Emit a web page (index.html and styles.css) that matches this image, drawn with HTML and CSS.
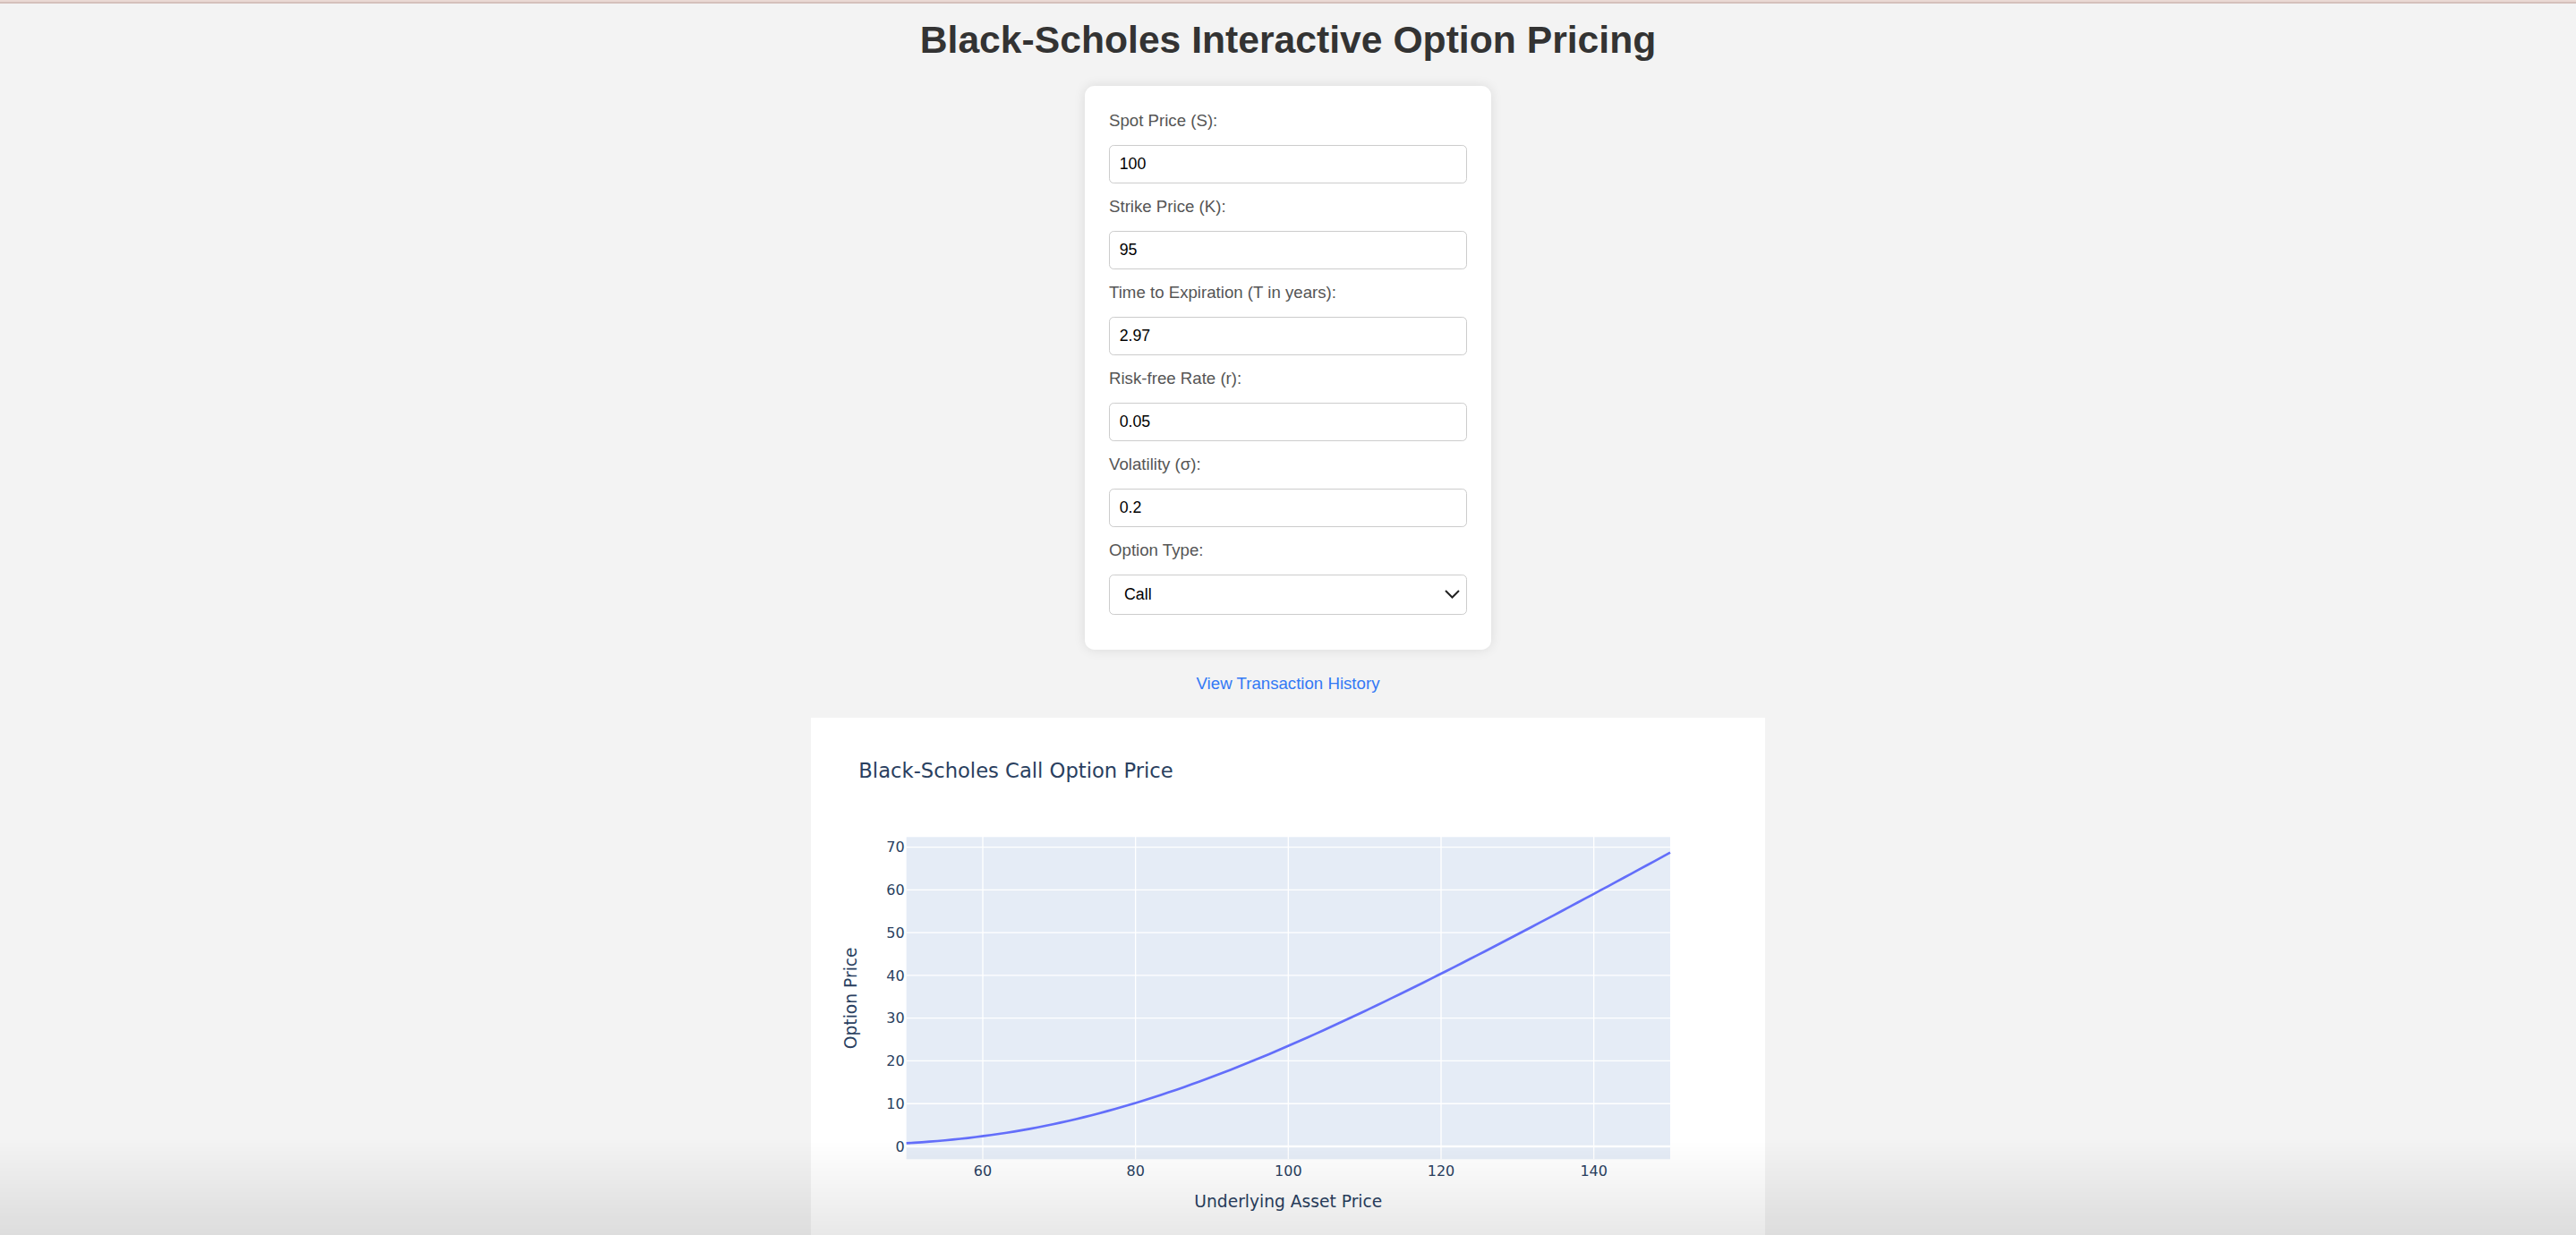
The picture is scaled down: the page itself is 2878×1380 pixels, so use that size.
FILE: index.html
```
<!DOCTYPE html>
<html>
<head>
   <meta name="viewport" content="width=device-width, initial-scale=1.0">
   <title>Black-Scholes Option Pricing</title>
   <link rel="stylesheet" href="styles.css">
</head>
<body>
<div class="topLine"></div>
<h1 class="title">Black-Scholes Interactive Option Pricing</h1>

<div class="formCard">
	<label for="spot">Spot Price (S):</label>
	<input type="number" id="spot" value="100">
	<label for="strike">Strike Price (K):</label>
	<input type="number" id="strike" value="95">
	<label for="time">Time to Expiration (T in years):</label>
	<input type="number" id="time" value="2.97">
	<label for="rate">Risk-free Rate (r):</label>
	<input type="number" id="rate" value="0.05">
	<label for="vol">Volatility (σ):</label>
	<input type="number" id="vol" value="0.2">
	<label for="optType">Option Type:</label>
	<div class="selectWrap">
		<select id="optType">
			<option value="call">Call</option>
			<option value="put">Put</option>
		</select>
		<svg class="chevron" width="17" height="10" viewBox="0 0 17 10"><path d="M1 1 L8.5 8.5 L16 1" fill="none" stroke="#222" stroke-width="2"/></svg>
	</div>
</div>

<div class="linkRow">
	<a class="historyLink" href="#">View Transaction History</a>
</div>

<div class="chartBox">
	<svg class="chart" width="1066.67" height="600" viewBox="0 0 1066.67 600">
		<rect x="106.67" y="133.33" width="853.33" height="360" fill="#e5ecf6"/>
		<g id="gridX" stroke="#fff" stroke-width="1.33"></g>
		<g id="gridY" stroke="#fff" stroke-width="1.33"></g>
		<line x1="106.67" x2="960" y1="479" y2="479" stroke="#fff" stroke-width="2.67"/>
		<polyline id="curve" fill="none" stroke="#636efa" stroke-width="2.67" stroke-linejoin="round"/>
		<g id="ticksX" class="tick" text-anchor="middle"></g>
		<g id="ticksY" class="tick" text-anchor="end"></g>
		<text class="chartTitle" x="53.33" y="67.3">Black-Scholes Call Option Price</text>
		<text class="axisTitle" x="533.33" y="547.3" text-anchor="middle">Underlying Asset Price</text>
		<text class="axisTitle" transform="translate(51,313.3) rotate(-90)" text-anchor="middle">Option Price</text>
	</svg>
</div>

<div class="screenFade"></div>

<script>
	var NS = 'http://www.w3.org/2000/svg';
	// plot area, in chart pixels
	var left = 106.67, right = 960, top = 133.33, bottom = 493.33;
	var xMin = 50, xMax = 150;
	var pxPerX = (right - left) / (xMax - xMin);
	var zeroY = 479, pxPerY = 4.778;

	function sx(v){ return left + (v - xMin) * pxPerX; }
	function sy(v){ return zeroY - v * pxPerY; }

	function addEl(parent, tag, attrs, txt){
		var el = document.createElementNS(NS, tag);
		for (var k in attrs) el.setAttribute(k, attrs[k]);
		if (txt !== undefined) el.textContent = txt;
		document.getElementById(parent).appendChild(el);
	}

	// grid lines and tick labels
	for (var gx = 60; gx <= 140; gx += 20){
		addEl('gridX', 'line', {x1: sx(gx), x2: sx(gx), y1: top, y2: bottom});
		addEl('ticksX', 'text', {x: sx(gx), y: 511.7}, gx);
	}
	for (var gy = 0; gy <= 70; gy += 10){
		if (gy > 0) addEl('gridY', 'line', {x1: left, x2: right, y1: sy(gy), y2: sy(gy)});
		addEl('ticksY', 'text', {x: 104.7, y: sy(gy) + 5.8}, gy);
	}

	// normal cdf (Abramowitz-Stegun approximation)
	function normCdf(x){
		var t = 1 / (1 + 0.2316419 * Math.abs(x));
		var d = 0.3989423 * Math.exp(-x * x / 2);
		var p = d * t * (0.3193815 + t * (-0.3565638 + t * (1.781478 + t * (-1.821256 + t * 1.330274))));
		return x > 0 ? 1 - p : p;
	}

	function callPrice(S, K, T, r, v){
		var d1 = (Math.log(S / K) + (r + v * v / 2) * T) / (v * Math.sqrt(T));
		var d2 = d1 - v * Math.sqrt(T);
		return S * normCdf(d1) - K * Math.exp(-r * T) * normCdf(d2);
	}

	var K = parseFloat(document.getElementById('strike').value);
	var T = parseFloat(document.getElementById('time').value);
	var r = parseFloat(document.getElementById('rate').value);
	var vol = parseFloat(document.getElementById('vol').value);

	var pts = [];
	for (var i = 0; i < 100; i++){
		var s = xMin + i * (xMax - xMin) / 99;
		pts.push(sx(s).toFixed(2) + ',' + sy(callPrice(s, K, T, r, vol)).toFixed(2));
	}
	document.getElementById('curve').setAttribute('points', pts.join(' '));
</script>
</body>
</html>
```

FILE: styles.css
```
html, body {
	margin: 0;
	padding: 0;
}
body {
	background: #f3f3f3;
	font-family: "Liberation Sans", Arial, sans-serif;
	color: #333;
}
.topLine {
	height: 2px;
	background: #ead8d3;
	border-bottom: 2px solid #d5c0bb;
}
.title {
	margin: 16px 0 27px;
	text-align: center;
	font-size: 42.67px;
	font-weight: bold;
	color: #333;
}
.formCard {
	width: 400px;
	margin: 0 auto;
	padding: 28px 26.67px 26.67px;
	background: #fff;
	border-radius: 10.67px;
	box-shadow: 0 0 13px rgba(0, 0, 0, 0.1);
}
.formCard label {
	display: block;
	margin-bottom: 15.5px;
	font-size: 18.67px;
	color: #555;
}
.formCard input,
.formCard select {
	display: block;
	width: 100%;
	box-sizing: border-box;
	height: 43px;
	margin: 0 0 15.5px;
	padding: 0 10.67px;
	border: 1px solid #ccc;
	border-radius: 5.33px;
	background: #fff;
	font-family: "Liberation Sans", Arial, sans-serif;
	font-size: 17.78px;
	color: #000;
	outline: none;
}
.selectWrap {
	position: relative;
}
.formCard select {
	height: 45px;
	margin-bottom: 13.3px;
	padding-left: 16px;
	-webkit-appearance: none;
	appearance: none;
}
.chevron {
	position: absolute;
	right: 8px;
	top: 17.5px;
	pointer-events: none;
}
.linkRow {
	margin: 27px 0;
	text-align: center;
	font-size: 18.67px;
}
.historyLink {
	color: #3279f5;
	text-decoration: none;
}
.chartBox {
	width: 1066.67px;
	height: 600px;
	margin: 0 auto;
	background: #fff;
}
.chart {
	display: block;
	font-family: "DejaVu Sans", Verdana, sans-serif;
}
.tick {
	font-size: 16px;
	fill: #2a3f5f;
}
.chartTitle {
	font-size: 22.67px;
	fill: #2a3f5f;
}
.axisTitle {
	font-size: 18.67px;
	fill: #2a3f5f;
}
.screenFade {
	position: fixed;
	left: 0;
	right: 0;
	bottom: 0;
	height: 105px;
	background: linear-gradient(rgba(0, 0, 0, 0), rgba(0, 0, 0, 0.09));
	pointer-events: none;
}
```
